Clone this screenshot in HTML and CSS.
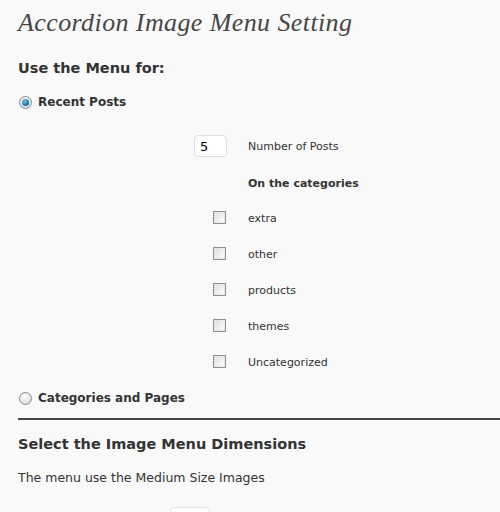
FILE: index.html
```html
<!DOCTYPE html>
<html>
<head>
<meta charset="utf-8">
<link rel="stylesheet" href="styles.css">
</head>
<body>
<div class="wrap">
  <h2 class="title">Accordion Image Menu Setting</h2>
  <h3 class="sect first">Use the Menu for:</h3>
  <label class="opt"><span class="radio on"></span>Recent Posts</label>
  <div class="table">
    <div class="cell-l row-num"><input class="num" type="text" value="5"></div>
    <div class="cell-r row-num">Number of Posts</div>
    <div class="cell-l row-cat"></div>
    <div class="cell-r row-cat bold">On the categories</div>
    <div class="cell-l row"><span class="check"></span></div>
    <div class="cell-r row">extra</div>
    <div class="cell-l row"><span class="check"></span></div>
    <div class="cell-r row">other</div>
    <div class="cell-l row"><span class="check"></span></div>
    <div class="cell-r row">products</div>
    <div class="cell-l row"><span class="check"></span></div>
    <div class="cell-r row">themes</div>
    <div class="cell-l row"><span class="check"></span></div>
    <div class="cell-r row">Uncategorized</div>
  </div>
  <label class="opt opt2"><span class="radio"></span>Categories and Pages</label>
  <hr class="rule">
  <h3 class="sect">Select the Image Menu Dimensions</h3>
  <p class="note">The menu use the Medium Size Images</p>
  <div class="bottom"><span class="box2"></span></div>
</div>
</body>
</html>
```
FILE: styles.css
```css
html, body {
  margin: 0;
  padding: 0;
  background: #f9f9f9;
  overflow: hidden;
}
body {
  width: 500px;
  height: 512px;
  font-family: "DejaVu Sans", Verdana, sans-serif;
  color: #333;
  font-size: 11px;
}
.wrap {
  padding-left: 18px;
}
.title {
  margin: 0;
  padding-top: 8px;
  height: 38px;
  box-sizing: border-box;
  font-family: Georgia, "Liberation Serif", serif;
  font-style: italic;
  font-weight: normal;
  font-size: 26px;
  line-height: 30px;
  color: #464646;
  letter-spacing: 0.4px;
}
.sect {
  margin: 0;
  font-size: 14.5px;
  font-weight: bold;
  color: #333;
  line-height: 20px;
}
.first {
  margin-top: 20px;
}
.opt {
  display: flex;
  align-items: center;
  height: 20px;
  margin-top: 14px;
  font-weight: bold;
  font-size: 12px;
  color: #333;
}
.radio {
  width: 11px;
  height: 11px;
  border-radius: 50%;
  border: 1px solid #8a8a8a;
  background: radial-gradient(circle at 40% 35%, #fff 0, #e6e6e6 55%, #c8c8c8 100%);
  margin-left: 1px;
  margin-right: 6px;
  position: relative;
  box-sizing: content-box;
  flex: none;
}
.radio.on::after {
  content: "";
  position: absolute;
  left: 2px;
  top: 2px;
  width: 7px;
  height: 7px;
  border-radius: 50%;
  background: radial-gradient(circle at 40% 35%, #7fc4ec 0, #1c74b0 60%, #0d4b7a 100%);
}
.table {
  display: grid;
  grid-template-columns: 210px auto;
  column-gap: 20px;
  margin-top: 23px;
}
.cell-l {
  display: flex;
  align-items: center;
  justify-content: flex-end;
}
.cell-r {
  display: flex;
  align-items: center;
}
.row-num { height: 22px; margin-bottom: 19px; }
.row-cat { height: 14px; margin-bottom: 21px; }
.row { height: 14px; margin-bottom: 22px; }
.row:nth-last-child(-n+2) { margin-bottom: 0; }
.bold { font-weight: bold; }
.num {
  width: 33px;
  height: 22px;
  box-sizing: border-box;
  border: 1px solid #dfdfdf;
  border-radius: 4px;
  background: #fff;
  font-family: "DejaVu Sans", Verdana, sans-serif;
  font-size: 13px;
  color: #000;
  padding: 0 0 0 5px;
  margin: 0 1px 0 0;
}
.check {
  width: 11px;
  height: 11px;
  border: 1px solid #8f8f8f;
  background: linear-gradient(135deg, #dcdcdc 0%, #f2f2f2 60%, #fff 100%);
  box-shadow: inset 0 0 0 1px #e8e8e8;
  margin-right: 2px;
  margin-top: -2px;
}
.opt2 {
  margin-top: 19px;
}
.rule {
  margin: 10px 0 0 0;
  border: 0;
  border-top: 2px solid #464646;
  height: 0;
}
.rule + .sect {
  margin-top: 14px;
}
.note {
  margin: 16px 0 0 0;
  font-size: 12.5px;
  line-height: 16px;
  color: #333;
}
.bottom {
  margin-top: 21px;
  padding-left: 152px;
}
.box2 {
  display: block;
  width: 38px;
  height: 20px;
  border: 1px solid #e3e3e3;
  border-radius: 4px;
  background: #fff;
}
```
